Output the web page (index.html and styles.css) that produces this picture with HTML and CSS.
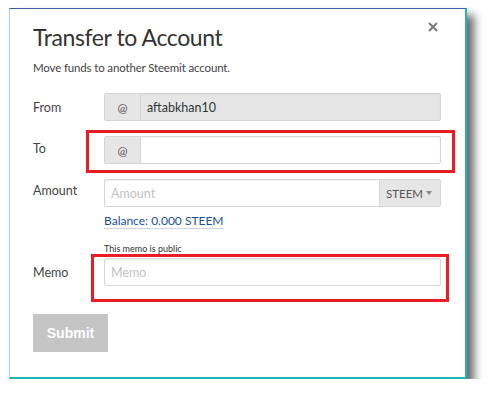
FILE: index.html
```html
<!DOCTYPE HTML>
<html>
<head>
  <title>Transfer to Account</title>
  <meta charset="UTF-8" name="viewport" content="width=device-width, initial-scale=1">
  <link rel="stylesheet" href="styles.css">
</head>
<body>
  <div class="page">
    <div class="modal">
      <button class="close" aria-label="Close">
        <svg width="10" height="10" viewBox="0 0 10 10"><path d="M1 1L9 9M9 1L1 9" stroke="#7a7a7a" stroke-width="2"/></svg>
      </button>
      <h1>Transfer to Account</h1>
      <p class="lead">Move funds to another Steemit account.</p>

      <div class="form">
        <div class="row from-row">
          <label>From</label>
          <div class="group disabled">
            <span class="addon">@</span>
            <span class="field">aftabkhan10</span>
          </div>
        </div>

        <div class="row to-row">
          <label>To</label>
          <div class="group mark-to">
            <span class="addon">@</span>
            <span class="field"></span>
          </div>
        </div>

        <div class="row amount-row">
          <label>Amount</label>
          <div class="group">
            <span class="field placeholder">Amount</span>
            <span class="select">STEEM <i class="caret"></i></span>
          </div>
        </div>

        <div class="row balance-row">
          <span></span>
          <a class="balance" href="#">Balance: 0.000 STEEM</a>
        </div>

        <div class="row hint-row">
          <span></span>
          <small>This memo is public</small>
        </div>

        <div class="row memo-row">
          <label>Memo</label>
          <div class="group mark-memo">
            <span class="field placeholder">Memo</span>
          </div>
        </div>
      </div>

      <button class="submit">Submit</button>
    </div>
  </div>
</body>
</html>
```

FILE: styles.css
```css
html {
  font-family: 'Lato', 'Noto Sans', sans-serif;
  color: #333333;
  background-color: #ffffff;
}
body {
  margin: 0;
}
.page {
  padding: 8px 0 0 9px;
}
.modal {
  position: relative;
  box-sizing: border-box;
  width: 458px;
  height: 371px;
  background-color: #ffffff;
  border-top: 1px solid #3d5ea8;
  border-left: 1px solid #b9c9f2;
  border-right: 2px solid #1fb5b8;
  border-bottom: 2px solid #1fb5b8;
  box-shadow: 7px 7px 9px rgba(0, 0, 0, 0.6);
  padding: 13px 25px 0 23px;
}
.close {
  position: absolute;
  top: 13px;
  right: 27px;
  border: none;
  background: none;
  padding: 0;
  cursor: pointer;
}
.close svg {
  display: block;
}
h1 {
  font-size: 23px;
  letter-spacing: -0.4px;
  font-weight: normal;
  color: #333333;
  margin: 0;
  line-height: 30px;
}
.lead {
  font-size: 11.5px;
  letter-spacing: -0.15px;
  color: #444444;
  margin: 8px 0 0 0;
  line-height: 16px;
}
.form {
  margin-top: 17px;
}
.row {
  display: grid;
  grid-template-columns: 71px 337px;
  align-items: center;
  font-size: 12.5px;
}
.row label {
  color: #444444;
}
.to-row {
  margin-top: 15px;
}
.to-row label {
  margin-top: -4px;
}
.amount-row {
  margin-top: 15px;
}
.amount-row label {
  margin-top: -6px;
}
.balance-row {
  margin-top: 7px;
}
.hint-row {
  margin-top: 14px;
}
.memo-row {
  margin-top: 4px;
}
.group {
  position: relative;
  display: flex;
  height: 28px;
  box-sizing: border-box;
  border: 1px solid #d6d6d6;
  border-radius: 2px;
  background-color: #ffffff;
  box-shadow: inset 0 1px 2px rgba(0, 0, 0, 0.06);
}
.group.disabled {
  background-color: #e6e6e6;
}
.addon {
  width: 35px;
  flex: none;
  display: flex;
  align-items: center;
  justify-content: center;
  background-color: #e6e6e6;
  border-right: 1px solid #d6d6d6;
  color: #555555;
  font-size: 12px;
}
.field {
  flex: 1;
  display: flex;
  align-items: center;
  padding-left: 6px;
  color: #333333;
}
.placeholder {
  color: #c2c2c2;
}
.select {
  width: 61px;
  flex: none;
  display: flex;
  align-items: center;
  justify-content: space-between;
  box-sizing: border-box;
  padding: 0 8px 0 6px;
  background-color: #e6e6e6;
  border-left: 1px solid #d6d6d6;
  color: #555555;
  font-size: 11.5px;
}
.caret {
  width: 0;
  height: 0;
  border-left: 3px solid transparent;
  border-right: 3px solid transparent;
  border-top: 4px solid #8a8a8a;
}
.balance {
  justify-self: start;
  color: #1a5099;
  text-decoration: none;
  border-bottom: 1px solid #c9d3e6;
  font-size: 12px;
  line-height: 14px;
}
small {
  font-size: 9px;
  color: #333333;
}
.mark-to::after,
.mark-memo::after {
  content: "";
  position: absolute;
  border: 3px solid #ec1c24;
  box-sizing: border-box;
}
.mark-to::after {
  left: -19px;
  top: -7px;
  right: -15px;
  bottom: -10px;
}
.mark-memo::after {
  left: -14px;
  top: -5px;
  right: -9px;
  bottom: -17px;
}
.submit {
  margin-top: 28px;
  width: 75px;
  height: 38px;
  border: none;
  border-radius: 0;
  background-color: #c5c5c5;
  color: #ffffff;
  font-family: 'Liberation Sans', Arial, sans-serif;
  font-weight: bold;
  font-size: 14px;
  cursor: pointer;
}
```
